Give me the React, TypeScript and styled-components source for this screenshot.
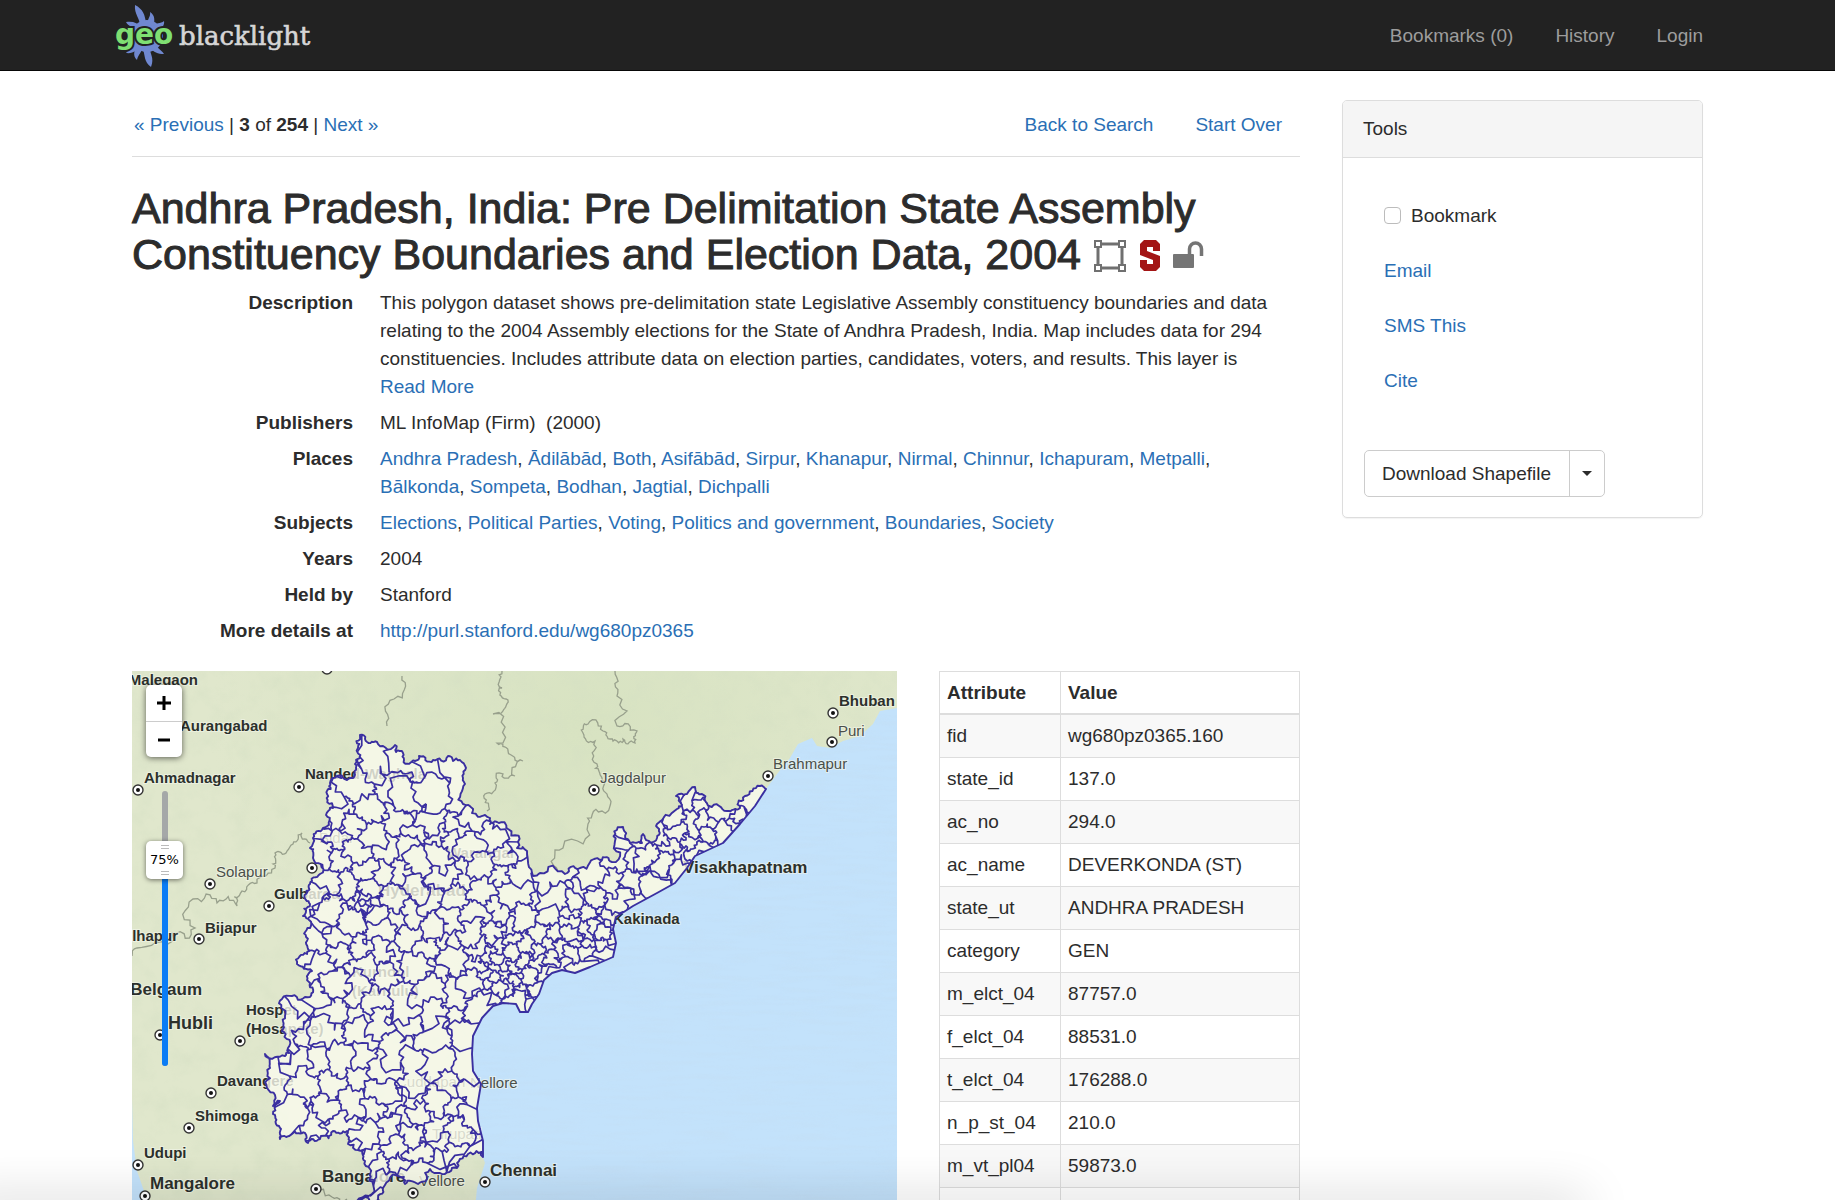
import React, { useState } from 'react';
import styled, { createGlobalStyle } from 'styled-components';

const GlobalStyle = createGlobalStyle`
  *, *::before, *::after { box-sizing: border-box; }
  body {
    margin: 0;
    background: #fff;
    color: #2c2c2c;
    font-family: "Liberation Sans", Arial, sans-serif;
    font-size: 19px;
    line-height: 27px;
  }
`;

/* ---------- page frame ---------- */

const Page = styled.div`
  height: 100vh;
  overflow: hidden auto;
  scrollbar-width: none;
`;

const Navbar = styled.header`
  background: #222;
  border-bottom: 1px solid #080808;
`;

const Container = styled.div`
  max-width: 1603px;
  margin: 0 auto;
  padding: 0 16px;
`;

const NavInner = styled(Container)`
  display: flex;
  align-items: center;
  justify-content: space-between;
  height: 70px;
`;

const Brand = styled.a`
  display: flex;
  margin-left: -18px;
`;

const NavLinks = styled.nav`
  display: flex;
  gap: 42px;
`;

const NavLink = styled.a`
  color: #9d9d9d;
  text-decoration: none;
`;

const Columns = styled(Container)`
  display: grid;
  grid-template-columns: minmax(0, 1fr) 361px;
  gap: 42px;
  align-items: start;
  padding-top: 29px;
`;

const Link = styled.a`
  color: #2a6fb5;
  text-decoration: none;
`;

const BottomShade = styled.div`
  position: fixed;
  left: -40px;
  right: 250px;
  bottom: -20px;
  height: 20px;
  box-shadow: 0 0 50px rgba(0, 0, 0, 0.22);
  pointer-events: none;
`;

/* ---------- document header ---------- */

const Pager = styled.div`
  display: flex;
  justify-content: space-between;
  padding: 11px 18px 18px 2px;
  border-bottom: 1px solid #ddd;
`;

const PagerLinks = styled.div`
  display: flex;
  gap: 42px;
`;

const Title = styled.h1`
  margin: 28px 0 12px;
  font-size: 43px;
  font-weight: 400;
  line-height: 46px;
  -webkit-text-stroke: 1px currentColor;
`;

const TitleIcons = styled.span`
  display: inline-flex;
  align-items: center;
  gap: 12px;
  vertical-align: -4px;
  -webkit-text-stroke: 0;
`;

const Metadata = styled.dl`
  display: grid;
  grid-template-columns: 221px minmax(0, 1fr);
  column-gap: 27px;
  row-gap: 8px;
  margin: 0 0 26px;
  line-height: 28px;
`;

const Term = styled.dt`
  font-weight: 700;
  text-align: right;
`;

const Detail = styled.dd`
  margin: 0;
`;

const ReadMore = styled(Link)`
  display: block;
`;

/* ---------- map ---------- */

const DataRow = styled.div`
  display: grid;
  grid-template-columns: minmax(0, 1fr) 361px;
  gap: 42px;
  align-items: start;
`;

const MapFrame = styled.div`
  position: relative;
  height: 548px;
  overflow: hidden;
  background: #c3e2fb;
`;

const MapSvg = styled.svg`
  display: block;
  width: 100%;
  height: 548px;
`;

const ZoomControl = styled.div`
  position: absolute;
  top: 14px;
  left: 14px;
  width: 36px;
  border-radius: 5px;
  background: #fff;
  box-shadow: 0 1px 6px rgba(0, 0, 0, 0.6);
`;

const ZoomButton = styled.button`
  display: flex;
  align-items: center;
  justify-content: center;
  width: 36px;
  height: 36px;
  padding: 0;
  border: 0;
  background: none;
  color: #000;

  & + & { border-top: 1px solid #ccc; }
`;

const Opacity = styled.label`
  position: absolute;
  top: 101px;
  left: 14px;
  width: 37px;
  height: 313px;
`;

const Track = styled.span`
  position: absolute;
  top: 19px;
  bottom: 19px;
  left: 16px;
  width: 6px;
  border-radius: 3px;
  background: #a5a8a8;
  overflow: hidden;
`;

const TrackFill = styled.span`
  position: absolute;
  bottom: 0;
  width: 6px;
  background: #0a7cf5;
`;

const Range = styled.input`
  position: absolute;
  inset: 0;
  width: 37px;
  height: 313px;
  margin: 0;
  appearance: none;
  background: transparent;
  writing-mode: vertical-lr;
  direction: rtl;

  &::-webkit-slider-thumb {
    appearance: none;
    width: 37px;
    height: 38px;
    border-radius: 5px;
    background: #fff;
    box-shadow: 0 1px 5px rgba(0, 0, 0, 0.55);
  }
`;

const ThumbText = styled.output`
  position: absolute;
  left: 0;
  width: 37px;
  height: 38px;
  display: flex;
  flex-direction: column;
  align-items: center;
  justify-content: space-between;
  padding: 4px 0;
  font-family: "DejaVu Sans", sans-serif;
  font-size: 13px;
  line-height: 16px;
  color: #000;
  pointer-events: none;

  &::before, &::after {
    content: "";
    width: 8px;
    height: 4px;
    border: solid #bbb;
    border-width: 1px 0;
  }
`;

/* ---------- attribute table ---------- */

const Table = styled.table`
  width: 100%;
  border-collapse: collapse;
  border: 1px solid #ddd;
`;

const HeadCell = styled.th<{ $width?: number }>`
  width: ${(p) => (p.$width ? `${p.$width}px` : 'auto')};
  padding: 7px;
  border: 1px solid #ddd;
  border-bottom-width: 2px;
  text-align: left;
`;

const Row = styled.tr`
  &:nth-child(odd) { background: #f8f8f8; }
`;

const Cell = styled.td`
  height: 43px;
  padding: 7px;
  border: 1px solid #ddd;
`;

/* ---------- sidebar ---------- */

const Panel = styled.aside`
  border: 1px solid #ddd;
  border-radius: 5px;
  box-shadow: 0 1px 1px rgba(0, 0, 0, 0.05);
`;

const PanelHead = styled.h2`
  margin: 0;
  padding: 14px 20px 15px;
  border-bottom: 1px solid #ddd;
  border-radius: 4px 4px 0 0;
  background: #f5f5f5;
  font-size: 19px;
  font-weight: 400;
  line-height: 27px;
`;

const PanelBody = styled.div`
  padding: 44px 21px 20px;
`;

const ToolList = styled.ul`
  display: grid;
  gap: 28px;
  margin: 0 0 56px;
  padding: 0 0 0 20px;
  list-style: none;
`;

const BookmarkLabel = styled.label`
  display: flex;
  align-items: center;
  gap: 10px;
`;

const Checkbox = styled.input`
  appearance: none;
  width: 17px;
  height: 17px;
  margin: 0;
  border: 1px solid #bcbcbc;
  border-radius: 4px;
  background: #fff;
`;

const ButtonGroup = styled.div`
  display: inline-flex;
  vertical-align: top;
  border: 1px solid #ccc;
  border-radius: 5px;
`;

const Button = styled.button`
  display: flex;
  align-items: center;
  height: 45px;
  padding: 0 18px 0 17px;
  border: 0;
  background: none;
  color: #2c2c2c;
  font: inherit;
`;

const CaretButton = styled(Button)`
  padding: 0 12px;
  border-left: 1px solid #ccc;
`;

const Caret = styled.span`
  border: solid transparent;
  border-width: 5px 5px 0;
  border-top-color: #2c2c2c;
`;

/* ---------- map geometry ---------- */

type Pt = [number, number];

const toPoints = (s: string): Pt[] => s.trim().split(/\s+/).map((p) => p.split(',').map(Number) as Pt);

const NORTH = toPoints(`171,245 178,233 174,223 178,213 188,203 181,187 178,177 181,167 191,157 194,144 201,137
  195,123 198,112 205,105 221,107 223,93 228,87 226,77 228,64 233,68 245,71 263,74 264,81 271,82 272,89
  283,90 287,85 301,89 316,85 328,89 334,97 333,113 331,133 340,142 353,144 358,153 365,151 376,158
  385,177 395,180 401,205 408,202 433,203 448,197 468,189 480,191 483,170 491,156 498,172 510,172 511,163
  525,167 525,153 545,138 550,134 544,125 555,123 563,116 570,123 577,135 595,140 608,137 613,125 628,115 634,118`);
const COAST = toPoints(`634,118 623,135 608,153 591,172 563,185 555,197 543,212 525,222 501,235 484,246 481,258
  484,272 481,286 458,296 443,302 430,299 420,302 412,309 407,323 400,333 396,341 388,341 384,333 371,332
  361,335 350,347 341,365 340,383 341,400 349,413 345,437 346,450 351,470 351,486`);
const SOUTH = toPoints(`351,486 336,483 325,497 308,502 298,498 286,513 273,513 271,507 251,517 248,530 225,530
  241,513 238,498 233,490 233,478 216,473 215,460 201,460 188,468 176,472 173,462 160,463 148,468 147,455 141,443
  148,430 141,435 135,417 138,397 133,383 153,385 156,377 150,360 153,345 150,328 160,325 178,326 178,312
  180,300 165,293 175,283 175,270 178,257 171,245`);

const hash = (x: number, y: number) => {
  const v = Math.sin(x * 12.9898 + y * 78.233) * 43758.5453;
  return v - Math.floor(v) - 0.5;
};

/* Midpoint displacement between two points; the end point is included. */
const wiggle = (a: Pt, b: Pt, amount: number, depth: number): Pt[] => {
  const dx = b[0] - a[0];
  const dy = b[1] - a[1];
  if (depth === 0 || Math.hypot(dx, dy) < 3) return [b];
  const k = hash(a[0] + b[0], a[1] + b[1]) * amount;
  const m: Pt = [(a[0] + b[0]) / 2 - dy * k, (a[1] + b[1]) / 2 + dx * k];
  return [...wiggle(a, m, amount, depth - 1), ...wiggle(m, b, amount, depth - 1)];
};

const roughen = (line: Pt[], amount: number): Pt[] =>
  line.slice(1).reduce<Pt[]>((out, p, i) => out.concat(wiggle(line[i], p, amount, 3)), [line[0]]);

const toPath = (pts: Pt[]) => 'M' + pts.map((p) => `${p[0].toFixed(1)} ${p[1].toFixed(1)}`).join('L');

const OUTLINE: Pt[] = [...roughen(NORTH, 0.7), ...COAST, ...roughen(SOUTH, 0.7)];
const OUTLINE_PATH = toPath(OUTLINE) + 'Z';

const inside = (x: number, y: number) => {
  let hit = false;
  for (let i = 0, j = OUTLINE.length - 1; i < OUTLINE.length; j = i++) {
    const [xi, yi] = OUTLINE[i];
    const [xj, yj] = OUTLINE[j];
    if (yi > y !== yj > y && x < ((xj - xi) * (y - yi)) / (yj - yi) + xi) hit = !hit;
  }
  return hit;
};

const spacing = (x: number, y: number) => {
  const near = (cx: number, cy: number, r: number) => Math.hypot(x - cx, y - cy) < r;
  if (near(239, 232, 9)) return 4;
  if (near(370, 303, 17)) return 6;
  if (near(450, 260, 38) || near(378, 300, 42)) return 10;
  if (x > 485) return 13;
  if (near(420, 225, 38)) return 29;
  if (y < 115) return 27;
  if (y < 145) return 22;
  if (y > 420 && x > 230) return 16;
  return y > 300 ? 20 : 17;
};

const seeds: Pt[] = (() => {
  let state = 20040;
  const rand = () => {
    state = (state * 1664525 + 1013904223) % 4294967296;
    return state / 4294967296;
  };
  const pts: Pt[] = [];
  for (let n = 0; n < 9000; n++) {
    const x = 130 + rand() * 510;
    const y = 60 + rand() * 475;
    if (!inside(x, y)) continue;
    const r = spacing(x, y);
    if (pts.every((p) => Math.hypot(p[0] - x, p[1] - y) > r)) pts.push([x, y]);
  }
  return pts;
})();

type Edge = { a: Pt; owner: number };

const BOUNDARIES = (() => {
  let d = '';
  seeds.forEach(([sx, sy], i) => {
    let cell: Edge[] = [
      { a: [sx - 60, sy - 60], owner: -1 },
      { a: [sx + 60, sy - 60], owner: -1 },
      { a: [sx + 60, sy + 60], owner: -1 },
      { a: [sx - 60, sy + 60], owner: -1 },
    ];
    seeds.forEach(([tx, ty], j) => {
      if (i === j || Math.hypot(tx - sx, ty - sy) > 120) return;
      const nx = tx - sx;
      const ny = ty - sy;
      const c = (nx * (tx + sx) + ny * (ty + sy)) / 2;
      const next: Edge[] = [];
      cell.forEach((e, k) => {
        const b = cell[(k + 1) % cell.length].a;
        const da = e.a[0] * nx + e.a[1] * ny - c;
        const db = b[0] * nx + b[1] * ny - c;
        const t = da / (da - db);
        const cut: Pt = [e.a[0] + (b[0] - e.a[0]) * t, e.a[1] + (b[1] - e.a[1]) * t];
        if (da <= 0) next.push(e);
        if (da <= 0 && db > 0) next.push({ a: cut, owner: j });
        if (da > 0 && db <= 0) next.push({ a: cut, owner: e.owner });
      });
      cell = next;
    });
    cell.forEach((e, k) => {
      if (e.owner <= i) return;
      const b = cell[(k + 1) % cell.length].a;
      d += toPath([e.a, ...wiggle(e.a, b, 1.1, 3)]);
    });
  });
  return d;
})();

const SEA = `M900 37L765 37L748 40L741 53L728 65L711 70L698 77L685 75L680 67L666 73L658 87L645 103
  ${COAST.map((p) => `L${p[0]} ${p[1]}`).join('')}L353 492L345 517L341 560L900 560Z`;
const WEST_SEA = 'M-80 420L0 428L1 470L5 500L12 520L16 560L-80 560Z';

const STATE_LINES = [
  '370,0 370,17 374,28 371,40 361,43 365,72 376,80 391,90 383,105 371,103 363,112 353,123 355,140',
  '483,0 485,25 485,55 505,60 503,72 491,68 481,70 471,60 456,53 451,62 463,70 465,93 470,107 475,123 470,140 456,153 431,177 426,200',
  '178,172 170,162 161,173 155,180 143,182 143,197 125,212 110,220 105,235 85,232 61,228 63,257 40,262 5,277 0,285',
  '270,5 262,28 255,55',
  '180,517 200,526 215,528',
].map((s) => toPath(roughen(toPoints(s), 0.8)));

type Label = { t: string; x: number; y: number; s: number; minor?: boolean; end?: boolean };

const LABELS: Label[] = [
  { t: 'Malegaon', x: 66, y: 14, s: 15, end: true },
  { t: 'Aurangabad', x: 48, y: 60, s: 15 },
  { t: 'Ahmadnagar', x: 12, y: 112, s: 15 },
  { t: 'Nanded-Waghala', x: 173, y: 108, s: 15 },
  { t: 'Solapur', x: 84, y: 206, s: 15, minor: true },
  { t: 'Gulbarga', x: 142, y: 228, s: 15 },
  { t: 'Bijapur', x: 73, y: 262, s: 15 },
  { t: 'Kolhapur', x: 46, y: 270, s: 15, end: true },
  { t: 'Belgaum', x: 70, y: 324, s: 17, end: true },
  { t: 'Hubli', x: 36, y: 358, s: 18 },
  { t: 'Hospet', x: 114, y: 344, s: 15 },
  { t: '(Hosapete)', x: 114, y: 363, s: 15 },
  { t: 'Davangere', x: 85, y: 415, s: 15 },
  { t: 'Shimoga', x: 63, y: 450, s: 15 },
  { t: 'Udupi', x: 12, y: 487, s: 15 },
  { t: 'Mangalore', x: 18, y: 518, s: 17 },
  { t: 'Bangalore', x: 190, y: 511, s: 17 },
  { t: 'Vellore', x: 287, y: 515, s: 15, minor: true },
  { t: 'Chennai', x: 358, y: 505, s: 17 },
  { t: 'Nellore', x: 338, y: 417, s: 15, minor: true },
  { t: 'Kakinada', x: 481, y: 253, s: 15 },
  { t: 'Visakhapatnam', x: 551, y: 202, s: 17 },
  { t: 'Jagdalpur', x: 468, y: 112, s: 15, minor: true },
  { t: 'Brahmapur', x: 641, y: 98, s: 15, minor: true },
  { t: 'Puri', x: 706, y: 65, s: 15, minor: true },
  { t: 'Bhuban', x: 707, y: 35, s: 15 },
  { t: 'Bidar', x: 187, y: 172, s: 15, minor: true },
  { t: 'Warangal', x: 315, y: 187, s: 15 },
  { t: 'Hyderabad', x: 246, y: 225, s: 17 },
  { t: 'Kurnool', x: 220, y: 306, s: 15 },
  { t: '(Karnulu)', x: 220, y: 325, s: 15 },
  { t: 'Cuddapah', x: 264, y: 416, s: 15, minor: true },
  { t: 'Tirupati', x: 300, y: 468, s: 15, minor: true },
];

const TOWNS = toPoints(`6,119 167,116 78,213 137,235 180,197 67,268 28,364 108,370 79,422 57,457 6,494 13,525
  184,518 281,522 353,511 462,119 636,105 700,71 701,42 195,-2`);

function DistrictMap() {
  return (
    <MapSvg viewBox="0 0 765 548" preserveAspectRatio="xMinYMin slice" role="img" aria-label="Map of Andhra Pradesh constituencies">
      <defs>
        <clipPath id="state"><path d={OUTLINE_PATH} /></clipPath>
        <clipPath id="sea"><path d={SEA} /></clipPath>
        <filter id="relief" x="0" y="0" width="100%" height="100%">
          <feTurbulence type="fractalNoise" baseFrequency="0.05" numOctaves="4" seed="7" />
          <feColorMatrix values="0 0 0 0 0.66  0 0 0 0 0.74  0 0 0 0 0.55  2.4 0 0 0 -1" />
        </filter>
        <filter id="waves" x="0" y="0" width="100%" height="100%">
          <feTurbulence type="fractalNoise" baseFrequency="0.02 0.2" numOctaves="2" seed="3" />
          <feColorMatrix values="0 0 0 0 0.55  0 0 0 0 0.72  0 0 0 0 0.88  1.6 0 0 0 -0.7" />
        </filter>
        <radialGradient id="hills" cx="0.6" cy="0.1" r="0.5">
          <stop offset="0" stopColor="#d4e1bd" stopOpacity="0.7" />
          <stop offset="1" stopColor="#d4e1bd" stopOpacity="0" />
        </radialGradient>
      </defs>
      <rect width="765" height="548" fill="#e0e7cc" />
      <rect width="765" height="548" fill="url(#hills)" />
      <rect width="765" height="548" filter="url(#relief)" opacity="0.4" />
      <path d={SEA} fill="#c3e2fb" />
      <path d={WEST_SEA} fill="#c3e2fb" />
      <g clipPath="url(#sea)">
        <rect width="765" height="548" filter="url(#waves)" opacity="0.5" />
      </g>
      {STATE_LINES.map((d) => <path key={d} d={d} fill="none" stroke="#98a08c" strokeWidth="1.3" />)}
      {TOWNS.map(([x, y]) => (
        <g key={`${x}-${y}`}>
          <circle cx={x} cy={y} r="5" fill="#fff" stroke="#333" strokeWidth="1.4" />
          <circle cx={x} cy={y} r="2" fill="#111" />
        </g>
      ))}
      {LABELS.map((l) => (
        <text
          key={l.t}
          x={l.x}
          y={l.y}
          fontFamily="Liberation Sans, Arial, sans-serif"
          fontSize={l.s}
          fontWeight={l.minor ? 400 : 700}
          fill={l.minor ? '#4a4f4a' : '#2c302c'}
          textAnchor={l.end ? 'end' : 'start'}
          stroke="#f4f7ec"
          strokeOpacity="0.6"
          strokeWidth="2"
          paintOrder="stroke"
        >
          {l.t}
        </text>
      ))}
      <path d={OUTLINE_PATH} fill="#fafbee" fillOpacity="0.8" />
      <g clipPath="url(#state)">
        <path d={BOUNDARIES} fill="none" stroke="#3a2fa0" strokeWidth="1.7" strokeLinejoin="round" />
      </g>
      <path d={OUTLINE_PATH} fill="none" stroke="#3a2fa0" strokeWidth="1.9" strokeLinejoin="round" />
    </MapSvg>
  );
}

/* ---------- logo and icons ---------- */

function Logo() {
  return (
    <svg width="206" height="70" viewBox="0 0 206 70" role="img" aria-label="GeoBlacklight">
      <g fill="#7088d0">
        <circle cx="33" cy="36" r="16" />
        <path d="M26 26C26 18 20 14 21 5C29 9 31 15 32 23Z" />
        <path d="M34 24C33 18 37 17 36 12C42 16 40 21 40 26Z" />
        <path d="M39 27C41 22 47 24 50 21C51 25 47 29 45 31Z" />
        <path d="M22 30C20 26 14 27 12 22C19 21 24 23 27 27Z" />
        <path d="M20 42C19 48 14 50 12 53C19 54 24 50 26 46Z" />
        <path d="M36 46C35 54 41 57 37 67C30 62 31 55 29 49Z" />
        <path d="M28 46C29 52 24 54 23 60C18 55 21 51 22 46Z" />
        <path d="M41 43C42 48 47 49 50 54C44 54 39 52 37 48Z" />
      </g>
      <text x="1" y="44" fontFamily="DejaVu Sans, sans-serif" fontWeight="700" fontSize="28" fill="#7fdf72" stroke="#222" strokeWidth="4" paintOrder="stroke">geo</text>
      <text x="65" y="45" fontFamily="DejaVu Serif, serif" fontSize="26" fill="#d6d6d6" stroke="#d6d6d6" strokeWidth="0.6">blacklight</text>
    </svg>
  );
}

function PolygonIcon() {
  return (
    <svg width="34" height="34" viewBox="0 0 34 34" fill="none" stroke="#707070" aria-label="Polygon">
      <path strokeWidth="3" d="M8 5H26M8 29H26M5 8V26M29 8V26" />
      <path strokeWidth="2" fill="#fff" d="M2 2H8V8H2ZM26 2H32V8H26ZM2 26H8V32H2ZM26 26H32V32H26Z" />
    </svg>
  );
}

function StanfordIcon() {
  return (
    <svg width="22" height="34" viewBox="0 0 22 34" fill="#a31515" aria-label="Stanford">
      <path d="M5 1H17L21 5V12H14V8H8V12L21 17V28L17 32H5L1 28V21H8V25H14V21L1 16V5Z" />
    </svg>
  );
}

function UnlockIcon() {
  return (
    <svg width="32" height="34" viewBox="0 0 32 34" aria-label="Public">
      <rect x="0" y="15" width="21" height="14" rx="1" fill="#757575" />
      <path d="M16.500 16V10A6 6 0 0 1 28.500 10V17" fill="none" stroke="#757575" strokeWidth="3.500" />
    </svg>
  );
}

/* ---------- content ---------- */

const PLACES = ['Andhra Pradesh', 'Ādilābād', 'Both', 'Asifābād', 'Sirpur', 'Khanapur', 'Nirmal', 'Chinnur',
  'Ichapuram', 'Metpalli', 'Bālkonda', 'Sompeta', 'Bodhan', 'Jagtial', 'Dichpalli'];
const SUBJECTS = ['Elections', 'Political Parties', 'Voting', 'Politics and government', 'Boundaries', 'Society'];
const ATTRIBUTES = [
  ['fid', 'wg680pz0365.160'],
  ['state_id', '137.0'],
  ['ac_no', '294.0'],
  ['ac_name', 'DEVERKONDA (ST)'],
  ['state_ut', 'ANDHRA PRADESH'],
  ['category', 'GEN'],
  ['m_elct_04', '87757.0'],
  ['f_elct_04', '88531.0'],
  ['t_elct_04', '176288.0'],
  ['n_p_st_04', '210.0'],
  ['m_vt_pl04', '59873.0'],
  ['f_vt_pl04', '58487.0'],
];

const LinkList = ({ items }: { items: string[] }) => (
  <>
    {items.map((item, i) => (
      <React.Fragment key={item}>
        {i > 0 && ', '}
        <Link href="#">{item}</Link>
      </React.Fragment>
    ))}
  </>
);

export default function App() {
  const [opacity, setOpacity] = useState(75);

  return (
    <Page>
      <GlobalStyle />
      <Navbar>
        <NavInner>
          <Brand href="#"><Logo /></Brand>
          <NavLinks>
            <NavLink href="#">Bookmarks (0)</NavLink>
            <NavLink href="#">History</NavLink>
            <NavLink href="#">Login</NavLink>
          </NavLinks>
        </NavInner>
      </Navbar>

      <Columns>
        <main>
          <Pager>
            <div>
              <Link href="#">« Previous</Link> | <b>3</b> of <b>254</b> | <Link href="#">Next »</Link>
            </div>
            <PagerLinks>
              <Link href="#">Back to Search</Link>
              <Link href="#">Start Over</Link>
            </PagerLinks>
          </Pager>

          <Title>
            Andhra Pradesh, India: Pre Delimitation State Assembly Constituency Boundaries and Election Data, 2004{' '}
            <TitleIcons>
              <PolygonIcon />
              <StanfordIcon />
              <UnlockIcon />
            </TitleIcons>
          </Title>

          <Metadata>
            <Term>Description</Term>
            <Detail>
              This polygon dataset shows pre-delimitation state Legislative Assembly constituency boundaries and data
              relating to the 2004 Assembly elections for the State of Andhra Pradesh, India. Map includes data for 294
              constituencies. Includes attribute data on election parties, candidates, voters, and results. This layer is
              <ReadMore href="#">Read More</ReadMore>
            </Detail>
            <Term>Publishers</Term>
            <Detail>ML InfoMap (Firm)&nbsp; (2000)</Detail>
            <Term>Places</Term>
            <Detail><LinkList items={PLACES} /></Detail>
            <Term>Subjects</Term>
            <Detail><LinkList items={SUBJECTS} /></Detail>
            <Term>Years</Term>
            <Detail>2004</Detail>
            <Term>Held by</Term>
            <Detail>Stanford</Detail>
            <Term>More details at</Term>
            <Detail><Link href="#">http://purl.stanford.edu/wg680pz0365</Link></Detail>
          </Metadata>

          <DataRow>
            <MapFrame>
              <DistrictMap />
              <ZoomControl>
                <ZoomButton aria-label="Zoom in">
                  <svg width="14" height="14" viewBox="0 0 14 14" stroke="currentColor" strokeWidth="3"><path d="M0 7H14M7 0V14" /></svg>
                </ZoomButton>
                <ZoomButton aria-label="Zoom out">
                  <svg width="12" height="14" viewBox="0 0 12 14" stroke="currentColor" strokeWidth="3"><path d="M0 7H12" /></svg>
                </ZoomButton>
              </ZoomControl>
              <Opacity>
                <Track><TrackFill style={{ height: `${opacity}%` }} /></Track>
                <Range
                  type="range"
                  min={0}
                  max={100}
                  value={opacity}
                  aria-label="Layer opacity"
                  onChange={(e) => setOpacity(Number(e.target.value))}
                />
                <ThumbText style={{ top: Math.round((275 * (100 - opacity)) / 100) }}>{opacity}%</ThumbText>
              </Opacity>
            </MapFrame>

            <Table>
              <thead>
                <tr>
                  <HeadCell $width={121}>Attribute</HeadCell>
                  <HeadCell>Value</HeadCell>
                </tr>
              </thead>
              <tbody>
                {ATTRIBUTES.map(([name, value]) => (
                  <Row key={name}>
                    <Cell>{name}</Cell>
                    <Cell>{value}</Cell>
                  </Row>
                ))}
              </tbody>
            </Table>
          </DataRow>
        </main>

        <Panel>
          <PanelHead>Tools</PanelHead>
          <PanelBody>
            <ToolList>
              <li>
                <BookmarkLabel>
                  <Checkbox type="checkbox" />
                  Bookmark
                </BookmarkLabel>
              </li>
              <li><Link href="#">Email</Link></li>
              <li><Link href="#">SMS This</Link></li>
              <li><Link href="#">Cite</Link></li>
            </ToolList>
            <ButtonGroup>
              <Button>Download Shapefile</Button>
              <CaretButton aria-label="More download formats"><Caret /></CaretButton>
            </ButtonGroup>
          </PanelBody>
        </Panel>
      </Columns>
      <BottomShade />
    </Page>
  );
}
